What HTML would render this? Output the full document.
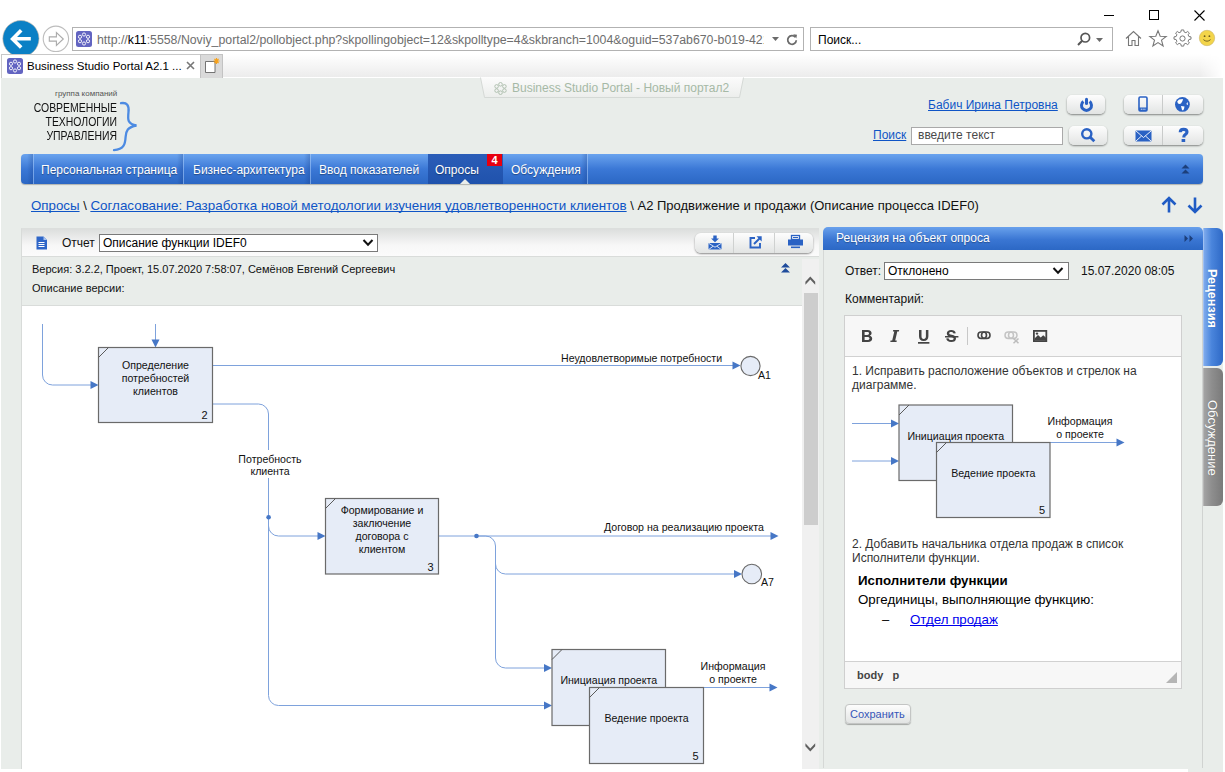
<!DOCTYPE html>
<html><head><meta charset="utf-8">
<style>
*{margin:0;padding:0;box-sizing:border-box}
html,body{width:1225px;height:772px;overflow:hidden;background:#fff;font-family:"Liberation Sans",sans-serif;position:relative}
.a{position:absolute;white-space:nowrap}
svg{position:absolute;overflow:visible}
#page{position:absolute;left:1px;top:78px;width:1222px;height:694px;background:#e9edea}
.nav .t{position:absolute;top:9px;font-size:12px;color:#fff;text-shadow:0 1px 1px rgba(0,0,0,.35)}
.nav .sep{position:absolute;top:0;width:8px;height:30px;margin-left:-6px;background:linear-gradient(90deg,rgba(10,40,110,0),rgba(10,40,110,.22) 72%,rgba(10,40,110,.3) 75%,rgba(170,205,250,.55) 76%,rgba(170,205,250,.55) 87%,rgba(10,40,110,0) 88%)}
.btn{position:absolute;border-radius:5px;background:linear-gradient(#fdfdfd,#e2e4e3);box-shadow:0 1px 2px rgba(0,0,0,.45);}
.lnk{color:#0f55c6;text-decoration:underline;text-decoration-skip-ink:none}
</style></head><body>
<!-- ===== browser chrome ===== -->
<div class="a" style="left:222px;top:54px;width:1003px;height:23px;background:linear-gradient(#fff,#ececec);-webkit-mask-image:linear-gradient(90deg,#000 97.5%,transparent 99.8%)"></div>
<!-- window controls -->
<div class="a" style="left:1104px;top:15px;width:10px;height:1px;background:#000"></div>
<div class="a" style="left:1149px;top:10px;width:10px;height:10px;border:1px solid #000"></div>
<svg style="left:1194px;top:10px" width="11" height="11"><path d="M0.5 0.5L10.5 10.5M10.5 0.5L0.5 10.5" stroke="#000" stroke-width="1.1"/></svg>
<!-- back / forward -->
<svg style="left:0px;top:18px" width="72" height="40"><circle cx="20.9" cy="20.6" r="18.1" fill="#0b80c5" stroke="#c3b5a8" stroke-width="0.6"/><path d="M30.8 20.8H12.6M21.2 12.3L12.6 20.9L21.2 29.5" stroke="#fff" stroke-width="3.6" fill="none"/><circle cx="55.9" cy="20.8" r="12.7" fill="#fff" stroke="#bdbdbd" stroke-width="1.1"/><path d="M49.3 18.9H56.4V14.6L63.3 21L56.4 27.4V23.1H49.3Z" fill="none" stroke="#ababab" stroke-width="1.1" stroke-linejoin="miter"/></svg>
<!-- address bar -->
<div class="a" style="left:72px;top:27px;width:732px;height:24px;border:1px solid #b2b2b2;background:#fff"></div>
<svg style="left:76px;top:31px" width="16" height="16"><rect x="0" y="0" width="16" height="16" rx="2.5" fill="#6264c1"/><g fill="none" stroke="#fff" stroke-width="0.9"><circle cx="8" cy="3.5" r="1.6"/><circle cx="8" cy="12.5" r="1.6"/><circle cx="4" cy="5.8" r="1.6"/><circle cx="12" cy="5.8" r="1.6"/><circle cx="4" cy="10.2" r="1.6"/><circle cx="12" cy="10.2" r="1.6"/></g></svg>
<div class="a" style="left:97px;top:32px;width:667px;overflow:hidden;font-size:12.3px;color:#6e6e6e;line-height:16px">http://<span style="color:#000">k11</span>:5558/Noviy_portal2/pollobject.php?skpollingobject=12&amp;skpolltype=4&amp;skbranch=1004&amp;oguid=537ab670-b019-421a</div>
<svg style="left:772px;top:37px" width="8" height="5"><path d="M0 0H7L3.5 4Z" fill="#6a6a6a"/></svg>
<svg style="left:786px;top:34px" width="12" height="12"><path d="M9.3 3.2A4.3 4.3 0 1 0 10.3 6.3" stroke="#6a6a6a" stroke-width="1.8" fill="none"/><path d="M7.2 0.3L11 0.8L10.3 4.5Z" fill="#6a6a6a"/></svg>
<!-- search box -->
<div class="a" style="left:810px;top:27px;width:303px;height:24px;border:1px solid #b2b2b2;background:#fff"></div>
<div class="a" style="left:818px;top:32px;font-size:12px;color:#000;line-height:16px">Поиск...</div>
<svg style="left:1077px;top:32px" width="14" height="14"><circle cx="8.3" cy="5.7" r="4.3" stroke="#555" stroke-width="1.7" fill="none"/><path d="M5.2 8.8L1 13" stroke="#555" stroke-width="2" /></svg>
<svg style="left:1096px;top:38px" width="8" height="5"><path d="M0 0H7L3.5 4Z" fill="#6a6a6a"/></svg>
<!-- tool icons -->
<svg style="left:1125px;top:30px" width="18" height="17"><path d="M1 8.5L8.5 1.5L16 8.5M3.5 6.5V15.5H7V10.5H10V15.5H13.5V6.5" stroke="#777" stroke-width="1.1" fill="none"/></svg>
<svg style="left:1149px;top:30px" width="19" height="17"><path d="M9 0.8L11.2 6.2L17.2 6.4L12.5 10.1L14.1 15.9L9 12.6L3.9 15.9L5.5 10.1L0.8 6.4L6.8 6.2Z" stroke="#777" stroke-width="1.1" fill="none"/></svg>
<svg style="left:1174px;top:30px" width="18" height="17"><g stroke="#777" stroke-width="1" fill="none"><circle cx="8.5" cy="8.5" r="2.6"/><path d="M7.3 1H9.7L10.1 3.1L11.9 3.9L13.7 2.6L15.4 4.3L14.1 6.1L14.9 7.9L17 8.3V10.7L14.9 11.1L14.1 12.9L15.4 14.7L13.7 16.4L11.9 15.1L10.1 15.9L9.7 18H7.3L6.9 15.9L5.1 15.1L3.3 16.4L1.6 14.7L2.9 12.9L2.1 11.1L0 10.7V8.3L2.1 7.9L2.9 6.1L1.6 4.3L3.3 2.6L5.1 3.9L6.9 3.1Z" transform="translate(0,-1) scale(1,0.95)"/></g></svg>
<svg style="left:1199px;top:30px" width="17" height="17"><circle cx="8" cy="8" r="7.7" fill="#f3d54a" stroke="#c9b46a" stroke-width="0.6"/><circle cx="5.6" cy="6.2" r="0.9" fill="#6b5a1c"/><circle cx="10.4" cy="6.2" r="0.9" fill="#6b5a1c"/><path d="M4.4 9.6Q8 12.8 11.6 9.6" stroke="#6b5a1c" stroke-width="0.9" fill="none"/></svg>
<!-- tabs -->
<div class="a" style="left:1px;top:54px;width:200px;height:24px;border:1px solid #c8c8c8;border-bottom:none;background:#fff"></div>
<svg style="left:7px;top:58px" width="16" height="16"><rect x="0" y="0" width="16" height="16" rx="2.5" fill="#6264c1"/><g fill="none" stroke="#fff" stroke-width="0.9"><circle cx="8" cy="3.5" r="1.6"/><circle cx="8" cy="12.5" r="1.6"/><circle cx="4" cy="5.8" r="1.6"/><circle cx="12" cy="5.8" r="1.6"/><circle cx="4" cy="10.2" r="1.6"/><circle cx="12" cy="10.2" r="1.6"/></g></svg>
<div class="a" style="left:27px;top:58px;font-size:11.5px;color:#000;line-height:16px">Business Studio Portal A2.1 ...</div>
<svg style="left:186px;top:61px" width="10" height="10"><path d="M1 1L8 8M8 1L1 8" stroke="#777" stroke-width="1.6"/></svg>
<div class="a" style="left:200px;top:54px;width:23px;height:24px;border:1px solid #c3c3c3;border-bottom:none;background:#dadada"></div>
<svg style="left:204px;top:57px" width="18" height="18"><path d="M1.5 4.5H11V15.5H1.5Z" fill="#fff" stroke="#666" stroke-width="0.9"/><g stroke="#f7a21b" stroke-width="1.2"><path d="M12.5 1V7M9.5 4H15.5M10.4 1.9L14.6 6.1M14.6 1.9L10.4 6.1"/></g></svg>

<div id="page"></div>

<!-- ===== page header ===== -->
<svg style="left:480px;top:77px" width="264" height="22"><defs><linearGradient id="tg" x1="0" y1="0" x2="0" y2="1"><stop offset="0" stop-color="#fbfbfb"/><stop offset="1" stop-color="#eceeec"/></linearGradient></defs><path d="M0.5 0.5L4.5 20.5H259.5L263.5 0.5" fill="url(#tg)" stroke="#d5d9d6" stroke-width="1"/></svg>
<svg style="left:494px;top:82px" width="13" height="13"><g fill="none" stroke="#a9bba9" stroke-width="0.9"><circle cx="6.5" cy="2.3" r="1.8"/><circle cx="6.5" cy="10.7" r="1.8"/><circle cx="2.6" cy="4.4" r="1.8"/><circle cx="10.4" cy="4.4" r="1.8"/><circle cx="2.6" cy="8.6" r="1.8"/><circle cx="10.4" cy="8.6" r="1.8"/></g></svg>
<div class="a" style="left:512px;top:81px;font-size:12px;line-height:14px;color:#a6b9a6">Business Studio Portal - Новый портал2</div>
<!-- logo -->
<div class="a" style="left:55px;top:89px;width:62px;text-align:right;font-size:8px;line-height:10px;color:#555">группа компаний</div>
<div class="a" style="left:17px;top:101px;width:100px;text-align:right;font-size:12px;line-height:14px;color:#111;transform:scaleX(.87);transform-origin:right top">СОВРЕМЕННЫЕ<br>ТЕХНОЛОГИИ<br>УПРАВЛЕНИЯ</div>
<svg style="left:113px;top:102px" width="24" height="49"><path d="M8 1.2C14 0.2 16.2 3.5 15.5 10C14.8 17 14 22 23.5 23.5C14.5 25 13 29 12.6 35C12.2 42 11 47.5 1 48.2" fill="none" stroke="#4d8be2" stroke-width="2.3" stroke-linecap="round"/></svg>
<!-- user area -->
<div class="a lnk" style="left:928px;top:98px;font-size:12px;line-height:15px">Бабич Ирина Петровна</div>
<div class="btn" style="left:1067px;top:95px;width:38px;height:19px"></div>
<svg style="left:1078px;top:96px" width="17" height="17"><path d="M11.6 5.5A5 5 0 1 1 5.4 5.5" stroke="#2a62c4" stroke-width="3" fill="none"/><path d="M8.5 3.2V7.6" stroke="#2a62c4" stroke-width="3" stroke-linecap="round"/></svg>
<div class="btn" style="left:1124px;top:95px;width:79px;height:19px"></div>
<div class="a" style="left:1162px;top:95px;width:1px;height:19px;background:#c9cbca"></div>
<svg style="left:1138px;top:96px" width="10" height="16"><rect x="1" y="1" width="8" height="14" rx="1.2" fill="none" stroke="#2a62c4" stroke-width="1.6"/><rect x="1" y="11.5" width="8" height="3.5" fill="#2a62c4"/><g fill="#fff"><rect x="2.8" y="12.7" width="1" height="1"/><rect x="4.6" y="12.7" width="1" height="1"/><rect x="6.4" y="12.7" width="1" height="1"/></g></svg>
<svg style="left:1175px;top:97px" width="15" height="15"><circle cx="7.4" cy="7.4" r="7.4" fill="#2a62c4"/><path d="M2.2 4.6L4 2.5L8 2L7.5 4L6 6.5L4.5 7L3 6.5Z M6 9L9.5 9.5L9 12L8 13.5L7 13L6.5 11Z M11.5 6.5L12.5 5L13 7.5L12 8Z" fill="#fff"/></svg>
<div class="a" style="left:873px;top:128px;font-size:12px;line-height:15px" ><span class="lnk">Поиск</span></div>
<div class="a" style="left:911px;top:127px;width:152px;height:18px;border:1px solid #a9a9a9;background:#fff;font-size:12px;color:#4a4a4a;padding-left:6px;line-height:15px">введите текст</div>
<div class="btn" style="left:1069px;top:126px;width:38px;height:19px"></div>
<svg style="left:1080px;top:127px" width="17" height="17"><circle cx="6.8" cy="6.8" r="4.6" stroke="#2a62c4" stroke-width="2.4" fill="none"/><path d="M10 10L14.3 14.3" stroke="#2a62c4" stroke-width="2.8"/></svg>
<div class="btn" style="left:1124px;top:126px;width:79px;height:19px"></div>
<div class="a" style="left:1162px;top:126px;width:1px;height:19px;background:#c9cbca"></div>
<svg style="left:1135px;top:130px" width="18" height="12"><rect x="0.5" y="0.5" width="16" height="11" rx="1" fill="#2a62c4"/><path d="M1 1L8.5 7.5L16 1M1 11L6.5 6M16 11L10.5 6" stroke="#fff" stroke-width="0.9" fill="none"/></svg>
<svg style="left:1178px;top:128px" width="12" height="15"><path d="M2.2 4.3C2.3 2.2 3.8 1.4 5.6 1.4C7.6 1.4 9 2.4 9 4.1C9 6.3 6.1 6.6 5.9 8.4V9.6" stroke="#2a62c4" stroke-width="3.1" fill="none"/><rect x="3.6" y="11" width="3.6" height="3" fill="#2a62c4"/></svg>
<!-- nav bar -->
<div class="a nav" style="left:21px;top:154px;width:1182px;height:30px;border-radius:4px;background:linear-gradient(#6aa3ee,#3b78d6 50%,#2b67c4);box-shadow:0 1px 1px rgba(0,0,0,.25)">
 <div class="sep" style="left:12px"></div>
 <div class="t" style="left:20px">Персональная страница</div>
 <div class="sep" style="left:162px"></div>
 <div class="t" style="left:172px">Бизнес-архитектура</div>
 <div class="sep" style="left:289px"></div>
 <div class="t" style="left:298px">Ввод показателей</div>
 <div class="a" style="left:407px;top:0;width:75px;height:30px;background:linear-gradient(#2b5db8,#1f52ac)"></div>
 <div class="t" style="left:414px">Опросы</div>
 <div class="a" style="left:466px;top:0;width:15px;height:12px;background:#e8000f;color:#fff;font-size:11px;font-weight:bold;text-align:center;line-height:12px">4</div>
 <svg style="left:439px;top:25px" width="10" height="5"><path d="M0 5L5 0L10 5Z" fill="#e9edea"/></svg>
 <div class="t" style="left:490px">Обсуждения</div>
 <div class="sep" style="left:566px"></div>
 <svg style="left:1160px;top:10px" width="9" height="10"><path d="M0.5 4.5L4.5 0.5L8.5 4.5ZM0.5 9.5L4.5 5.5L8.5 9.5Z" fill="#1c3f7a"/></svg>
</div>


<!-- ===== breadcrumb ===== -->
<div class="a" style="left:31px;top:198px;font-size:13px;line-height:16px;color:#111"><span class="lnk" style="font-size:13.3px">Опросы</span> \ <span class="lnk" style="font-size:13.4px">Согласование: Разработка новой методологии изучения удовлетворенности клиентов</span> \ A2 Продвижение и продажи (Описание процесса IDEF0)</div>
<svg style="left:1160px;top:196px" width="46" height="18"><path d="M9 16.5V2.5M2.5 8.5L9 2L15.5 8.5" stroke="#1f5bc4" stroke-width="2.6" fill="none"/><path d="M35 1.5V15.5M28.5 9.5L35 16L41.5 9.5" stroke="#1f5bc4" stroke-width="2.6" fill="none"/></svg>

<!-- ===== left panel ===== -->
<div class="a" style="left:21px;top:228px;width:798px;height:541px;border-left:1px solid #d8dbd9;border-top:1px solid #dcdfdd"></div>
<div class="a" style="left:22px;top:229px;width:797px;height:27px;background:linear-gradient(#dcdedd,#f7f7f7 60%,#fbfbfb)"></div>
<div class="a" style="left:22px;top:256px;width:797px;height:1px;background:#d9dcda"></div>
<svg style="left:36px;top:236px" width="12" height="14"><path d="M0.5 0.5H7.5L11 4V13.5H0.5Z" fill="#2f66c8"/><path d="M7.5 0.5V4H11" fill="#a9c3ee"/><g stroke="#fff" stroke-width="1"><path d="M2.5 6.5H8.5M2.5 8.5H8.5M2.5 10.5H8.5"/></g></svg>
<div class="a" style="left:62px;top:236px;font-size:12px;line-height:14px;color:#111">Отчет</div>
<div class="a" style="left:99px;top:234px;width:279px;height:18px;border:1px solid #7a7a7a;background:#fff;font-size:12px;line-height:15px;padding-left:3px;padding-top:1px;color:#000">Описание функции IDEF0</div>
<svg style="left:362px;top:238px" width="13" height="9"><path d="M1.5 2L6 6.7L10.5 2" stroke="#111" stroke-width="2" fill="none"/></svg>
<div class="btn" style="left:695px;top:233px;width:118px;height:20px;border-radius:6px"></div>
<div class="a" style="left:733px;top:233px;width:1px;height:20px;background:#cfd1d0"></div>
<div class="a" style="left:774px;top:233px;width:1px;height:20px;background:#cfd1d0"></div>
<svg style="left:708px;top:235px" width="14" height="15"><path d="M5.3 0.5H8.7V3.5H11L7 7.3L3 3.5H5.3Z" fill="#2a62c4"/><rect x="0.5" y="8" width="13" height="6.5" rx="0.8" fill="#2a62c4"/><path d="M1 8.5L7 12.2L13 8.5M1 14.3L5 11.3M13 14.3L9 11.3" stroke="#fff" stroke-width="0.8" fill="none"/></svg>
<svg style="left:749px;top:236px" width="13" height="13"><path d="M6 2H1.5V11.5H11V7" stroke="#2a62c4" stroke-width="1.9" fill="none"/><path d="M5 8L11 2" stroke="#2a62c4" stroke-width="2"/><path d="M7.5 0.3H12.7V5.5Z" fill="#2a62c4"/></svg>
<svg style="left:788px;top:235px" width="15" height="14"><rect x="3.5" y="0.5" width="8" height="4" fill="none" stroke="#2a62c4" stroke-width="1.3"/><rect x="0" y="4.5" width="15" height="6" fill="#2a62c4"/><rect x="3" y="11.5" width="9" height="1.6" fill="#2a62c4"/><rect x="5" y="2" width="5" height="1" fill="#2a62c4"/></svg>
<!-- info -->
<div class="a" style="left:32px;top:263px;font-size:11px;line-height:12px;color:#111">Версия: 3.2.2, Проект, 15.07.2020 7:58:07, Семёнов Евгений Сергеевич</div>
<div class="a" style="left:32px;top:282px;font-size:11px;line-height:12px;color:#111">Описание версии:</div>
<svg style="left:781px;top:263px" width="9" height="10"><path d="M0 4.5L4.5 0L9 4.5ZM0 9.5L4.5 5L9 9.5Z" fill="#1f4c9c"/></svg>
<div class="a" style="left:22px;top:305px;width:781px;height:1px;background:#d9dcda"></div>
<div class="a" style="left:22px;top:306px;width:781px;height:463px;background:#fff"></div>
<svg style="left:22px;top:306px" width="781" height="463" viewBox="22 306 781 463"><g font-family="Liberation Sans" font-size="10.6" fill="#111">
<g fill="none" stroke="#7ea2dc" stroke-width="1">
<path d="M42.5 324V375A10 10 0 0 0 52.5 385H92"/>
<path d="M155.5 324V340"/>
<path d="M212 365.5H733"/>
<path d="M212 404H258.5A10 10 0 0 1 268.5 414V695.5A10 10 0 0 0 278.5 705.5H545"/>
<path d="M268.5 517V526A10 10 0 0 0 278.5 536H318"/>
<path d="M439 536H771"/>
<path d="M476.5 536H485.5A10 10 0 0 1 495.5 546V564A10 10 0 0 0 505.5 574H735"/>
<path d="M495.5 564V658A10 10 0 0 0 505.5 668H545"/>
<path d="M703 687.5H770"/>
</g>
<path d="M90.5 381L98.5 385L90.5 389Z" fill="#4677c6"/><path d="M151.5 339.5L155.5 347.5L159.5 339.5Z" fill="#4677c6"/><path d="M732.5 361.5L740.5 365.5L732.5 369.5Z" fill="#4677c6"/><path d="M544 701.5L552 705.5L544 709.5Z" fill="#4677c6"/><path d="M317.5 532L325.5 536L317.5 540Z" fill="#4677c6"/><path d="M770.5 532L778.5 536L770.5 540Z" fill="#4677c6"/><path d="M734 570L742 574L734 578Z" fill="#4677c6"/><path d="M544 664L552 668L544 672Z" fill="#4677c6"/><path d="M769.5 683.5L777.5 687.5L769.5 691.5Z" fill="#4677c6"/>
<circle cx="268.6" cy="517.2" r="2.3" fill="#4677c6"/><circle cx="476.5" cy="536" r="2.3" fill="#4677c6"/>
<circle cx="750.5" cy="366" r="9.6" fill="#e6ecf7" stroke="#6a6a6a" stroke-width="1.1"/>
<circle cx="751.8" cy="574" r="9.8" fill="#e6ecf7" stroke="#6a6a6a" stroke-width="1.1"/>
<rect x="236" y="450" width="68" height="28" fill="#fff"/>
<text x="270" y="462.5" text-anchor="middle">Потребность</text><text x="270" y="475" text-anchor="middle">клиента</text>
<text x="561" y="362">Неудовлетворимые потребности</text>
<text x="758" y="379">A1</text>
<text x="604" y="530.5">Договор на реализацию проекта</text>
<text x="761" y="586">A7</text>
<text x="733" y="670" text-anchor="middle">Информация</text><text x="733" y="682.5" text-anchor="middle">о проекте</text>
<rect x="98.5" y="347.5" width="114.0" height="75.0" fill="#e6ecf7" stroke="#6a6a6a" stroke-width="1.2"/><path d="M98.5 357.5L108.5 347.5" stroke="#5a5a5a" stroke-width="1"/><text x="155.5" y="369.2" text-anchor="middle">Определение</text><text x="155.5" y="382.2" text-anchor="middle">потребностей</text><text x="155.5" y="395.2" text-anchor="middle">клиентов</text><text x="207.5" y="419.0" text-anchor="end" font-size="11">2</text>
<rect x="325.5" y="498.5" width="113.0" height="75.5" fill="#e6ecf7" stroke="#6a6a6a" stroke-width="1.2"/><path d="M325.5 508.5L335.5 498.5" stroke="#5a5a5a" stroke-width="1"/><text x="382.0" y="514" text-anchor="middle">Формирование и</text><text x="382.0" y="527" text-anchor="middle">заключение</text><text x="382.0" y="540" text-anchor="middle">договора с</text><text x="382.0" y="553" text-anchor="middle">клиентом</text><text x="433.5" y="570.5" text-anchor="end" font-size="11">3</text>
<rect x="552" y="649.5" width="113.5" height="76.0" fill="#e6ecf7" stroke="#6a6a6a" stroke-width="1.2"/><path d="M552 659.5L562 649.5" stroke="#5a5a5a" stroke-width="1"/><text x="608.75" y="684" text-anchor="middle">Инициация проекта</text>
<rect x="589.5" y="687.5" width="114.0" height="76.0" fill="#e6ecf7" stroke="#6a6a6a" stroke-width="1.2"/><path d="M589.5 697.5L599.5 687.5" stroke="#5a5a5a" stroke-width="1"/><text x="646.5" y="722" text-anchor="middle">Ведение проекта</text><text x="698.5" y="760.0" text-anchor="end" font-size="11">5</text>
</g></svg>
<!-- scrollbar -->
<div class="a" style="left:802px;top:259px;width:17px;height:510px;background:#f0f0f0"></div>
<svg style="left:804px;top:275px" width="14" height="11"><path d="M0.8 6.8L5.7 1.5L10.6 6.8V9.8L5.7 4.6L0.8 9.8Z" fill="#606060" transform="translate(0.6,0)"/></svg>
<div class="a" style="left:804px;top:293px;width:14px;height:232px;background:#cdcdcd"></div>
<svg style="left:804px;top:742px" width="14" height="11"><path d="M0.8 1.2L5.7 6.4L10.6 1.2V4.2L5.7 9.5L0.8 4.2Z" fill="#606060" transform="translate(0.6,0)"/></svg>

<!-- ===== right panel ===== -->
<div class="a" style="left:823px;top:227px;width:380px;height:23px;border-radius:5px 5px 0 0;background:linear-gradient(#69a1ec,#3a76d3 55%,#2c68c5)"></div>
<div class="a" style="left:836px;top:231px;font-size:12px;line-height:14px;color:#fff;text-shadow:0 1px 1px rgba(0,0,0,.3)">Рецензия на объект опроса</div>
<svg style="left:1184px;top:235px" width="10" height="7"><path d="M0.5 0L4 3.5L0.5 7ZM5.5 0L9 3.5L5.5 7Z" fill="#1c3f7a"/></svg>
<div class="a" style="left:823px;top:250px;width:380px;height:518px;border-left:1px solid #d5d8d6;border-right:1px solid #d0d3d1"></div>
<div class="a" style="left:845px;top:264px;font-size:12px;line-height:14px;color:#111">Ответ:</div>
<div class="a" style="left:884px;top:262px;width:185px;height:18px;border:1px solid #7a7a7a;background:#fff;font-size:12px;line-height:15px;padding-left:3px;padding-top:1px;color:#000">Отклонено</div>
<svg style="left:1052px;top:266px" width="13" height="9"><path d="M1.5 2L6 6.7L10.5 2" stroke="#111" stroke-width="2" fill="none"/></svg>
<div class="a" style="left:1081px;top:264px;font-size:12px;line-height:14px;color:#111">15.07.2020 08:05</div>
<div class="a" style="left:845px;top:292px;font-size:12px;line-height:14px;color:#111">Комментарий:</div>
<!-- editor -->
<div class="a" style="left:844px;top:315px;width:338px;height:374px;border:1px solid #cfcfcf;background:#fff"></div>
<div class="a" style="left:845px;top:316px;width:336px;height:41px;background:#f7f7f7;border-bottom:1px solid #d1d1d1"></div>
<svg style="left:862px;top:330px" width="11" height="12"><path d="M0 0H5.6C8.4 0 9.6 1.4 9.6 3.1C9.6 4.5 8.8 5.3 7.7 5.7C9.1 6 10.2 7.1 10.2 8.6C10.2 10.6 8.7 12 6 12H0ZM2.6 2.1V4.9H5.2C6.4 4.9 7 4.4 7 3.5C7 2.6 6.4 2.1 5.2 2.1ZM2.6 6.9V9.9H5.5C6.8 9.9 7.5 9.3 7.5 8.4C7.5 7.5 6.8 6.9 5.5 6.9Z" fill="#444"/></svg>
<svg style="left:890px;top:330px" width="10" height="12"><path d="M3.2 0H9.2L8.9 1.6H7.3L5.2 10.4H6.8L6.5 12H0.3L0.6 10.4H2.2L4.3 1.6H2.9Z" fill="#444"/></svg>
<svg style="left:918px;top:330px" width="12" height="14"><path d="M1 0H3.5V6.3C3.5 8 4.3 8.9 5.7 8.9C7.1 8.9 7.9 8 7.9 6.3V0H10.4V6.2C10.4 9.4 8.7 11 5.7 11C2.7 11 1 9.4 1 6.2Z" fill="#444"/><rect x="0" y="12" width="11.4" height="1.7" fill="#444"/></svg>
<svg style="left:945px;top:330px" width="14" height="12"><path d="M10.8 3.2L8.6 3.6C8.3 2.4 7.5 1.9 6.2 1.9C4.9 1.9 4.2 2.4 4.2 3.2C4.2 4 4.9 4.4 6.7 4.8C9.6 5.4 11 6.4 11 8.4C11 10.7 9.2 12 6.2 12C3.3 12 1.6 10.8 1.2 8.6L3.5 8.2C3.8 9.5 4.8 10.1 6.3 10.1C7.8 10.1 8.6 9.6 8.6 8.6C8.6 7.7 7.8 7.3 5.9 6.9C3.3 6.4 1.8 5.4 1.8 3.4C1.8 1.3 3.5 0 6.2 0C8.7 0 10.3 1 10.8 3.2Z" fill="#444"/><rect x="0" y="6" width="13.4" height="1.5" fill="#444"/></svg>
<div class="a" style="left:967px;top:327px;width:1px;height:18px;background:#c8c8c8"></div>
<svg style="left:977px;top:331px" width="15" height="9"><rect x="1" y="1" width="8.5" height="6.5" rx="3.2" fill="none" stroke="#444" stroke-width="1.6"/><rect x="4.5" y="1" width="8.5" height="6.5" rx="3.2" fill="none" stroke="#444" stroke-width="1.6"/></svg>
<svg style="left:1004px;top:331px" width="16" height="13"><g fill="none" stroke="#c4c4c4" stroke-width="1.5"><rect x="1" y="1" width="8.5" height="6.5" rx="3.2"/><rect x="4.5" y="1" width="8.5" height="6.5" rx="3.2"/></g><path d="M9.5 7.5L14.5 12.3M14.5 7.5L9.5 12.3" stroke="#bdbdbd" stroke-width="1.5"/></svg>
<svg style="left:1033px;top:330px" width="15" height="12"><rect x="0.9" y="0.9" width="12.4" height="10.2" fill="none" stroke="#444" stroke-width="1.8"/><path d="M1.5 10.5V8.5L5 5L7.7 7.5L10.2 5.3L13 7.8V10.5Z" fill="#444"/><circle cx="4" cy="3.6" r="1.2" fill="#444"/></svg>
<svg style="left:845px;top:357px" width="336" height="304" viewBox="845 357 336 304"><g font-family="Liberation Sans" font-size="10.6" fill="#111">
<g fill="none" stroke="#7ea2dc" stroke-width="1"><path d="M852 423.5H892"/><path d="M852 461H892"/><path d="M1050 442.5H1117"/></g>
<path d="M891 419.5L899 423.5L891 427.5Z" fill="#4677c6"/><path d="M891 457L899 461L891 465Z" fill="#4677c6"/><path d="M1116.5 438.5L1124.5 442.5L1116.5 446.5Z" fill="#4677c6"/>
<text x="1080" y="425" text-anchor="middle">Информация</text><text x="1080" y="437.5" text-anchor="middle">о проекте</text>
<rect x="899" y="405" width="113.5" height="75.5" fill="#e6ecf7" stroke="#6a6a6a" stroke-width="1.2"/><path d="M899 415L909 405" stroke="#5a5a5a" stroke-width="1"/><text x="955.75" y="439.5" text-anchor="middle">Инициация проекта</text>
<rect x="936.5" y="442.5" width="113.5" height="75.0" fill="#e6ecf7" stroke="#6a6a6a" stroke-width="1.2"/><path d="M936.5 452.5L946.5 442.5" stroke="#5a5a5a" stroke-width="1"/><text x="993.25" y="477" text-anchor="middle">Ведение проекта</text><text x="1045" y="514.0" text-anchor="end" font-size="11">5</text>
</g></svg>
<div class="a" style="left:852px;top:364px;font-size:12px;line-height:14px;color:#333">1. Исправить расположение объектов и стрелок на<br>диаграмме.</div>
<div class="a" style="left:852px;top:537px;font-size:12px;line-height:14px;color:#333">2. Добавить начальника отдела продаж в список<br>Исполнители функции.</div>
<div class="a" style="left:858px;top:573px;font-size:13.3px;font-weight:bold;line-height:16px;color:#000">Исполнители функции</div>
<div class="a" style="left:858px;top:592px;font-size:13.3px;line-height:16px;color:#000">Оргединицы, выполняющие функцию:</div>
<div class="a" style="left:882px;top:612px;font-size:13px;line-height:16px;color:#000">–</div>
<div class="a" style="left:910px;top:612px;font-size:13.3px;line-height:16px;color:#0000ee;text-decoration:underline;text-decoration-skip-ink:none">Отдел продаж</div>
<div class="a" style="left:845px;top:661px;width:336px;height:27px;background:#f7f7f7;border-top:1px solid #d1d1d1"></div>
<div class="a" style="left:857px;top:669px;font-size:11px;font-weight:bold;color:#444;line-height:13px">body&nbsp;&nbsp;&nbsp;p</div>
<svg style="left:1166px;top:672px" width="11" height="11"><path d="M11 0V11H0Z" fill="#b5b5b5"/></svg>
<div class="btn" style="left:845px;top:704px;width:66px;height:20px;border-radius:4px;border:1px solid #c3c5c4;box-shadow:0 1px 1px rgba(0,0,0,.3)"></div>
<div class="a" style="left:850px;top:708px;font-size:11px;line-height:13px;color:#3656b8">Сохранить</div>
<!-- side tabs -->
<div class="a" style="left:1203px;top:228px;width:20px;height:138px;border-radius:0 6px 6px 0;background:linear-gradient(90deg,#7eaaec,#4a85dc 40%,#2e69c6);border-left:1px solid #9fc0f2;"></div>
<div class="a" style="left:1204px;top:228px;width:20px;height:138px;color:#fff;font-size:12.6px;font-weight:bold;writing-mode:vertical-rl;line-height:20px;padding-top:41px;left:1202px;text-shadow:0 0 1px rgba(0,0,0,.2)">Рецензия</div>
<div class="a" style="left:1203px;top:368px;width:20px;height:138px;border-radius:0 6px 6px 0;background:linear-gradient(90deg,#a3a3a3,#8e8e8e 40%,#7a7a7a);border-left:1px solid #b5b5b5;"></div>
<div class="a" style="left:1204px;top:368px;width:20px;height:138px;color:#fff;font-size:13px;writing-mode:vertical-rl;line-height:20px;padding-top:32px;left:1202px;text-shadow:0 0 1px rgba(0,0,0,.3)">Обсуждение</div>
<div class="a" style="left:0;top:769px;width:1188px;height:3px;background:#fff"></div>

</body></html>
